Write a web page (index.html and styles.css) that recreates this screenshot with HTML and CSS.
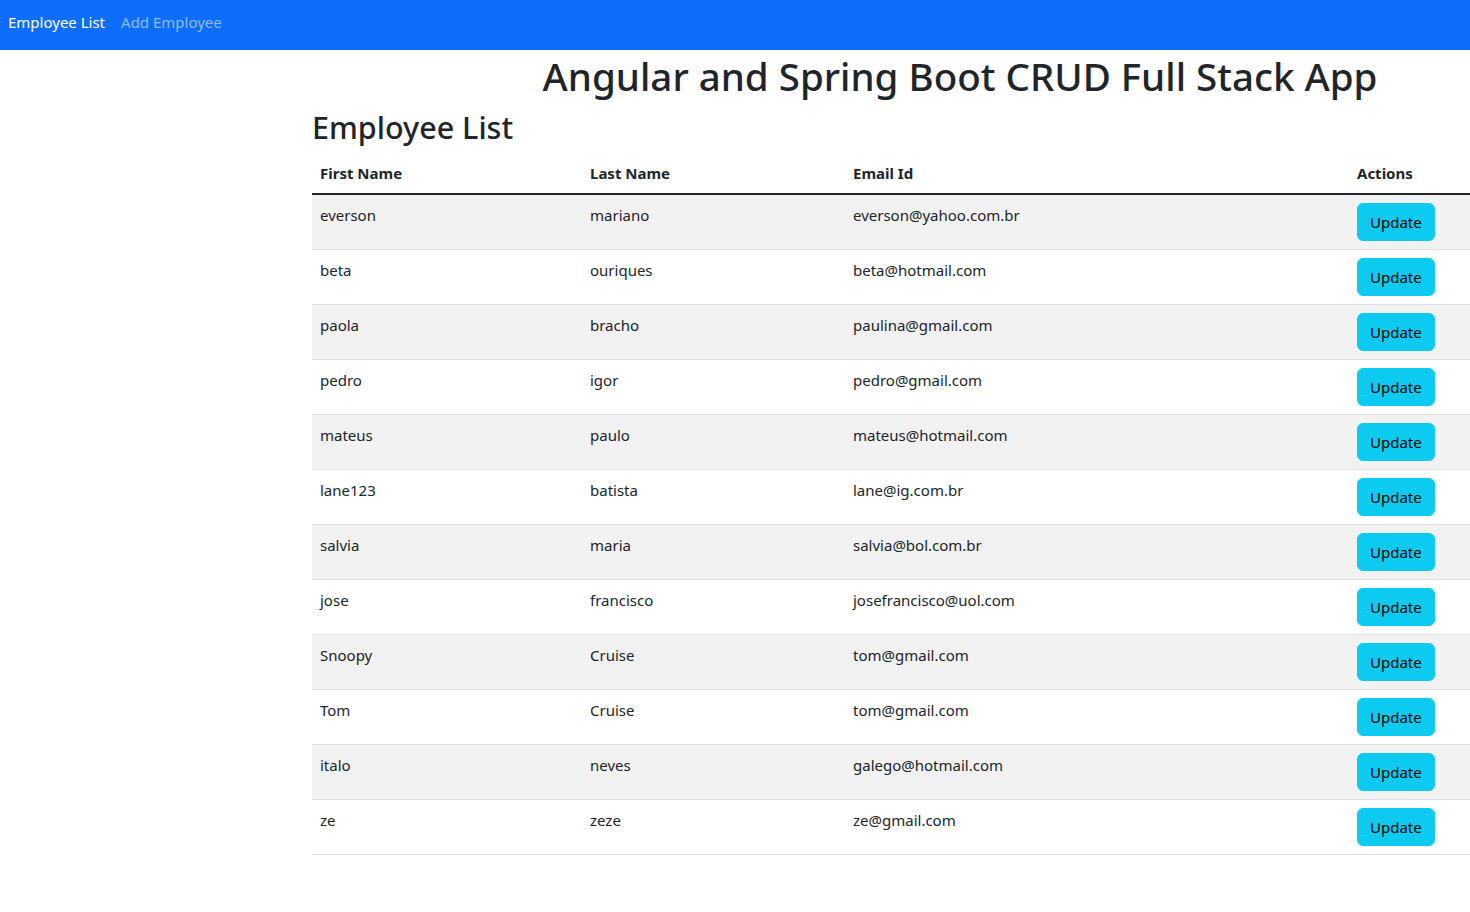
FILE: index.html
```html
<!DOCTYPE html>
<html lang="en">
<head>
<meta charset="utf-8">
<title>Angular and Spring Boot CRUD Full Stack App</title>
<link rel="stylesheet" href="styles.css">
</head>
<body>
<nav class="navbar">
  <a class="nav-link active" href="#">Employee List</a>
  <a class="nav-link" href="#">Add Employee</a>
</nav>
<div class="container">
  <h1 class="title">Angular and Spring Boot CRUD Full Stack App</h1>
  <h2 class="subtitle">Employee List</h2>
  <table class="table">
    <colgroup>
      <col class="c1"><col class="c2"><col class="c3"><col class="c4">
    </colgroup>
    <thead>
      <tr><th>First Name</th><th>Last Name</th><th>Email Id</th><th>Actions</th></tr>
    </thead>
    <tbody>
      <tr><td>everson</td><td>mariano</td><td>everson@yahoo.com.br</td><td><button class="btn">Update</button></td></tr>
      <tr><td>beta</td><td>ouriques</td><td>beta@hotmail.com</td><td><button class="btn">Update</button></td></tr>
      <tr><td>paola</td><td>bracho</td><td>paulina@gmail.com</td><td><button class="btn">Update</button></td></tr>
      <tr><td>pedro</td><td>igor</td><td>pedro@gmail.com</td><td><button class="btn">Update</button></td></tr>
      <tr><td>mateus</td><td>paulo</td><td>mateus@hotmail.com</td><td><button class="btn">Update</button></td></tr>
      <tr><td>lane123</td><td>batista</td><td>lane@ig.com.br</td><td><button class="btn">Update</button></td></tr>
      <tr><td>salvia</td><td>maria</td><td>salvia@bol.com.br</td><td><button class="btn">Update</button></td></tr>
      <tr><td>jose</td><td>francisco</td><td>josefrancisco@uol.com</td><td><button class="btn">Update</button></td></tr>
      <tr><td>Snoopy</td><td>Cruise</td><td>tom@gmail.com</td><td><button class="btn">Update</button></td></tr>
      <tr><td>Tom</td><td>Cruise</td><td>tom@gmail.com</td><td><button class="btn">Update</button></td></tr>
      <tr><td>italo</td><td>neves</td><td>galego@hotmail.com</td><td><button class="btn">Update</button></td></tr>
      <tr><td>ze</td><td>zeze</td><td>ze@gmail.com</td><td><button class="btn">Update</button></td></tr>
    </tbody>
  </table>
</div>
</body>
</html>
```

FILE: styles.css
```css
html, body {
  margin: 0;
  padding: 0;
  overflow-x: hidden;
}
body {
  font-family: "Segoe UI", "Noto Sans", "Open Sans", sans-serif;
  font-size: 15px;
  line-height: 24px;
  color: #212529;
  background: #fff;
}
.navbar {
  display: flex;
  align-items: center;
  gap: 16px;
  height: 50px;
  padding: 0 8px 7px;
  background: #0d6efd;
  box-sizing: border-box;
}
.nav-link {
  color: rgba(255, 255, 255, 0.55);
  text-decoration: none;
  font-size: 15px;
}
.nav-link.active {
  color: #fff;
}
.container {
  margin-left: 300px;
  width: 1320px;
  padding: 0 12px;
  box-sizing: border-box;
}
.title {
  margin: 2px 0 8px;
  font-size: 38.5px;
  font-weight: 500;
  line-height: 48px;
  text-align: center;
}
.subtitle {
  margin: 0 0 7px;
  font-size: 30.5px;
  font-weight: 500;
  line-height: 38px;
}
.table {
  width: 100%;
  border-collapse: collapse;
  table-layout: fixed;
}
.c1 { width: 270px; }
.c2 { width: 263px; }
.c3 { width: 504px; }
.table th {
  text-align: left;
  font-weight: 700;
  padding: 8px;
  border-bottom: 2px solid #212529;
}
.table td {
  padding: 8px;
  border-bottom: 1px solid #dee2e6;
  vertical-align: top;
}
.table tbody tr:nth-child(odd) td {
  background: #f2f2f2;
}
.btn {
  font-family: inherit;
  font-size: 15px;
  line-height: 24px;
  padding: 6px 12px;
  color: #000;
  background: #0dcaf0;
  border: 1px solid #0dcaf0;
  border-radius: 6px;
  cursor: pointer;
}
```
